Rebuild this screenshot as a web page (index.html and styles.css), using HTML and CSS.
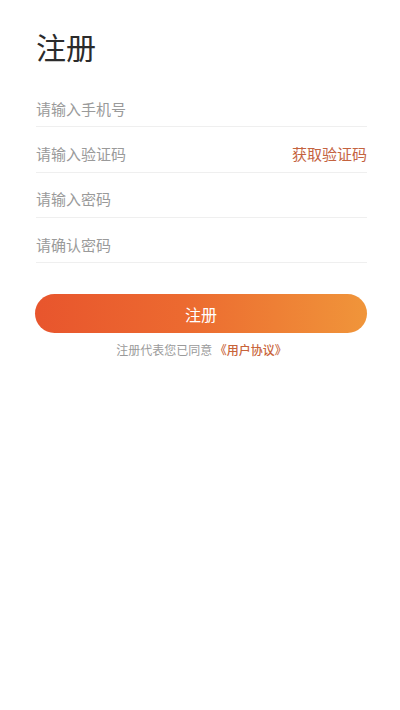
FILE: index.html
```html
<!DOCTYPE html>
<html lang="zh">
<head>
<meta charset="utf-8">
<title>注册</title>
<link rel="stylesheet" href="styles.css">
</head>
<body>
<main class="page">
  <h1 class="title">注册</h1>
  <div class="form">
    <div class="row"><span class="ph">请输入手机号</span></div>
    <div class="row"><span class="ph">请输入验证码</span><span class="code">获取验证码</span></div>
    <div class="row"><span class="ph">请输入密码</span></div>
    <div class="row"><span class="ph">请确认密码</span></div>
  </div>
  <button class="submit">注册</button>
  <p class="agree">注册代表您已同意 <span class="link">《用户协议》</span></p>
</main>
</body>
</html>
```
FILE: styles.css
```css
html, body {
  margin: 0;
  padding: 0;
  background: #fff;
}
body {
  font-family: "Noto Sans CJK SC", "Noto Sans", sans-serif;
  color: #333;
}
.page {
  padding: 26px 33px 0 36px;
}
.title {
  margin: 0;
  font-size: 30px;
  line-height: 40px;
  font-weight: 400;
  color: #2b2b2b;
}
.form {
  margin-top: 16px;
}
.row {
  display: flex;
  justify-content: space-between;
  align-items: center;
  height: 45.33px;
  box-sizing: border-box;
  padding-top: 9px;
  border-bottom: 1px solid #efefef;
}
.ph {
  font-size: 15px;
  line-height: 20px;
  color: #9a9a9a;
}
.code {
  font-size: 15px;
  line-height: 20px;
  color: #c4633f;
}
.submit {
  display: block;
  width: calc(100% + 1px);
  margin: 31px 0 0 -1px;
  height: 39px;
  border: none;
  border-radius: 20px;
  background: linear-gradient(90deg, #e8552d 0%, #ec6a30 45%, #f0953a 100%);
  color: #fff;
  font-family: inherit;
  font-size: 16px;
  padding: 0;
}
.agree {
  margin: 9px 0 0;
  text-align: center;
  font-size: 12px;
  line-height: 16px;
  color: #9a9a9a;
}
.link {
  color: #c8643a;
  font-weight: 500;
}
```
